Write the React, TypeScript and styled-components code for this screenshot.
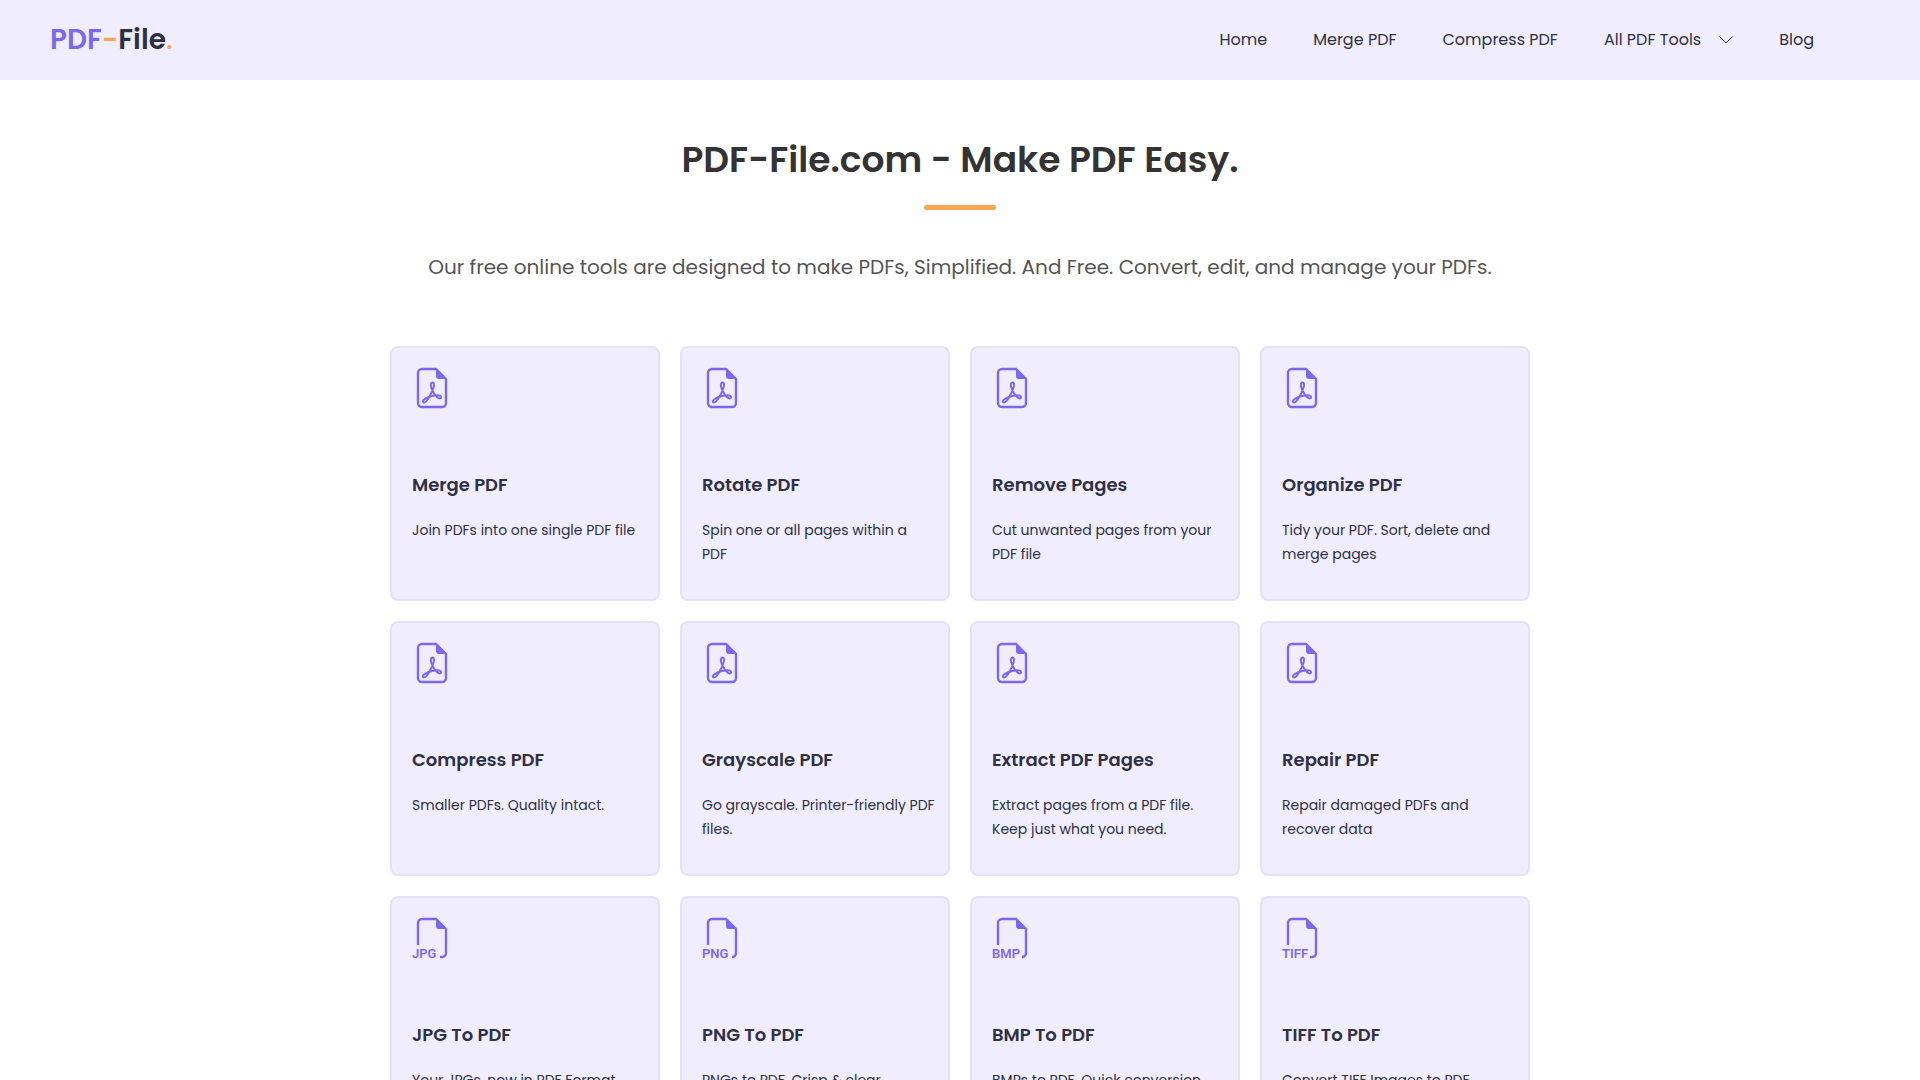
import React from "react";
import styled, { createGlobalStyle } from "styled-components";

const colors = {
  lavender: "#f0edff",
  border: "#e5e0fb",
  purple: "#7b68ee",
  orange: "#fba555",
  ink: "#2d3142",
  heading: "#333333",
  muted: "#555555",
};

const GlobalStyle = createGlobalStyle`
  *, *::before, *::after { box-sizing: border-box; }
  body {
    margin: 0;
    background: #fff;
    color: ${colors.ink};
    font-family: Poppins, Inter, "Open Sans", sans-serif;
    scrollbar-width: none;
  }
  a { color: inherit; text-decoration: none; }
`;

const Header = styled.header`
  display: flex;
  align-items: center;
  justify-content: space-between;
  height: 80px;
  padding: 0 106px 0 50px;
  background: ${colors.lavender};
`;

const Logo = styled.a`
  font-size: 28px;
  line-height: 40px;
  font-weight: 600;
`;

const LogoPart = styled.span<{ $color: string; $weight?: number }>`
  color: ${(p) => p.$color};
  font-weight: ${(p) => p.$weight ?? 600};
`;

const Nav = styled.nav`
  display: flex;
  align-items: center;
  gap: 46px;
  font-size: 16px;
  line-height: 24px;
`;

const NavLink = styled.a`
  display: flex;
  align-items: center;
  gap: 18px;
`;

const Intro = styled.section`
  padding: 52px 24px 62px;
  text-align: center;
`;

const Title = styled.h1`
  margin: 0;
  font-size: 36px;
  line-height: 56px;
  font-weight: 600;
  color: ${colors.heading};

  &::after {
    content: "";
    display: block;
    width: 72px;
    height: 5px;
    margin: 17px auto 0;
    border-radius: 3px;
    background: ${colors.orange};
  }
`;

const Lead = styled.p`
  margin: 40px 0 0;
  font-size: 20px;
  line-height: 34px;
  color: ${colors.muted};
`;

const Grid = styled.div`
  display: grid;
  grid-template-columns: repeat(4, 1fr);
  gap: 20px;
  max-width: 1140px;
  margin: 0 auto 60px;
`;

const Card = styled.a`
  display: flex;
  flex-direction: column;
  min-height: 255px;
  padding: 20px 8px 20px 20px;
  border: 2px solid ${colors.border};
  border-radius: 8px;
  background: ${colors.lavender};
`;

const CardTitle = styled.h2`
  margin: 64px 0 20px;
  font-size: 18px;
  line-height: 26px;
  font-weight: 600;
`;

const CardText = styled.p`
  margin: 0;
  font-size: 14px;
  line-height: 24px;
  white-space: pre-line;
`;

const IconSvg = styled.svg`
  display: block;
  flex: none;
  width: 40px;
  height: 40px;
  overflow: visible;
  fill: none;
  stroke: ${colors.purple};
  stroke-width: 2.4;
`;

const IconLabel = styled.text`
  font-family: Roboto, sans-serif;
  font-size: 13px;
  font-weight: 600;
  fill: ${colors.purple};
  stroke: none;
`;

type Tool = { title: string; text: string; format?: string; tail?: number };

const tools: Tool[] = [
  { title: "Merge PDF", text: "Join PDFs into one single PDF file" },
  { title: "Rotate PDF", text: "Spin one or all pages within a\nPDF" },
  { title: "Remove Pages", text: "Cut unwanted pages from your PDF file" },
  { title: "Organize PDF", text: "Tidy your PDF. Sort, delete and merge pages" },
  { title: "Compress PDF", text: "Smaller PDFs. Quality intact." },
  { title: "Grayscale PDF", text: "Go grayscale. Printer-friendly PDF files." },
  { title: "Extract PDF Pages", text: "Extract pages from a PDF file. Keep just what you need." },
  { title: "Repair PDF", text: "Repair damaged PDFs and recover data" },
  { title: "JPG To PDF", text: "Your JPGs, now in PDF Format.", format: "JPG", tail: 28 },
  { title: "PNG To PDF", text: "PNGs to PDF. Crisp & clear.", format: "PNG", tail: 30 },
  { title: "BMP To PDF", text: "BMPs to PDF. Quick conversion.", format: "BMP", tail: 30 },
  { title: "TIFF To PDF", text: "Convert TIFF Images to PDF.", format: "TIFF", tail: 28 },
];

function FileIcon({ format, tail }: { format?: string; tail?: number }) {
  return (
    <IconSvg viewBox="0 0 40 40" aria-hidden="true">
      {format ? (
        <>
          <path d={`M6 27V5a4 4 0 0 1 4-4H24L34 11V35a4 4 0 0 1-4 4H${tail}`} />
          <IconLabel x="0" y="40">{format}</IconLabel>
        </>
      ) : (
        <>
          <path d="M24 1H10a4 4 0 0 0-4 4V35a4 4 0 0 0 4 4H30a4 4 0 0 0 4-4V11Z" />
          <path
            strokeWidth="2"
            d="M12 34.4C14.6 34.8 20.6 24 21.8 18.6C22.4 15.6 21.6 14.6 20.4 14.6C19 14.6 18.6 16.4 19 18.6C19.8 22.6 24.6 30.4 27.6 30.4C29.6 30.4 29.6 28 27.2 27.4C23.6 26.6 16.6 28.6 13 30.8C10.2 32.4 10.4 34.2 12 34.4Z"
          />
        </>
      )}
      <path d="M24 0.500V8a3 3 0 0 0 3 3H34.500Z" fill={colors.purple} stroke="none" />
    </IconSvg>
  );
}

export default function App() {
  return (
    <>
      <GlobalStyle />
      <Header>
        <Logo href="#">
          <LogoPart $color={colors.purple}>PDF</LogoPart>
          <LogoPart $color={colors.orange}>-</LogoPart>
          <LogoPart $color={colors.ink}>File</LogoPart>
          <LogoPart $color={colors.orange} $weight={500}>.</LogoPart>
        </Logo>
        <Nav>
          <NavLink href="#">Home</NavLink>
          <NavLink href="#">Merge PDF</NavLink>
          <NavLink href="#">Compress PDF</NavLink>
          <NavLink href="#">
            All PDF Tools
            <svg width="14" height="8" viewBox="0 0 14 8" fill="none" stroke={colors.ink} aria-hidden="true">
              <path d="M0.500 0.500L7 7L13.500 0.500" />
            </svg>
          </NavLink>
          <NavLink href="#">Blog</NavLink>
        </Nav>
      </Header>
      <main>
        <Intro>
          <Title>PDF-File.com - Make PDF Easy.</Title>
          <Lead>
            Our free online tools are designed to make PDFs, Simplified. And Free. Convert, edit, and manage your PDFs.
          </Lead>
        </Intro>
        <Grid>
          {tools.map((tool) => (
            <Card href="#" key={tool.title}>
              <FileIcon format={tool.format} tail={tool.tail} />
              <CardTitle>{tool.title}</CardTitle>
              <CardText>{tool.text}</CardText>
            </Card>
          ))}
        </Grid>
      </main>
    </>
  );
}
